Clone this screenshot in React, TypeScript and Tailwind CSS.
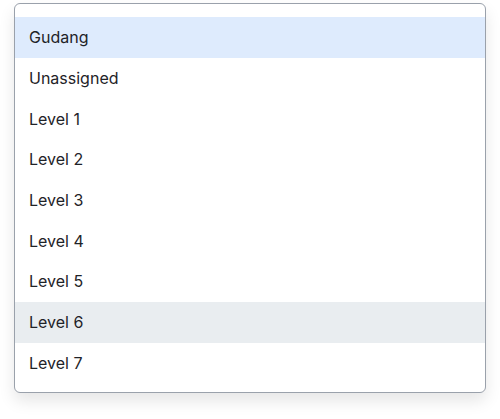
import React from 'react'

const items = ['Gudang', 'Unassigned', 'Level 1', 'Level 2', 'Level 3', 'Level 4', 'Level 5', 'Level 6', 'Level 7']

export default function App() {
  return (
    <div className="w-[500px] h-[419px] bg-white" style={{ fontFamily: 'Inter, "Noto Sans", sans-serif' }}>
      <div className="ml-[14px] mt-[3px] w-[472px] h-[390px] rounded-[6px] border border-[#9aa1ab] bg-white shadow-[0_8px_16px_rgba(0,0,0,0.10)] overflow-hidden pt-[13px]">
        {items.map((item, i) => (
          <div
            key={item}
            className={
              'h-[40.7px] flex items-center pl-[14px] text-[16px] text-[#1f2328] ' +
              (i === 0 ? 'bg-[#deebfd]' : i === 7 ? 'bg-[#e9edf0]' : 'bg-white')
            }
          >
            {item}
          </div>
        ))}
      </div>
    </div>
  )
}
